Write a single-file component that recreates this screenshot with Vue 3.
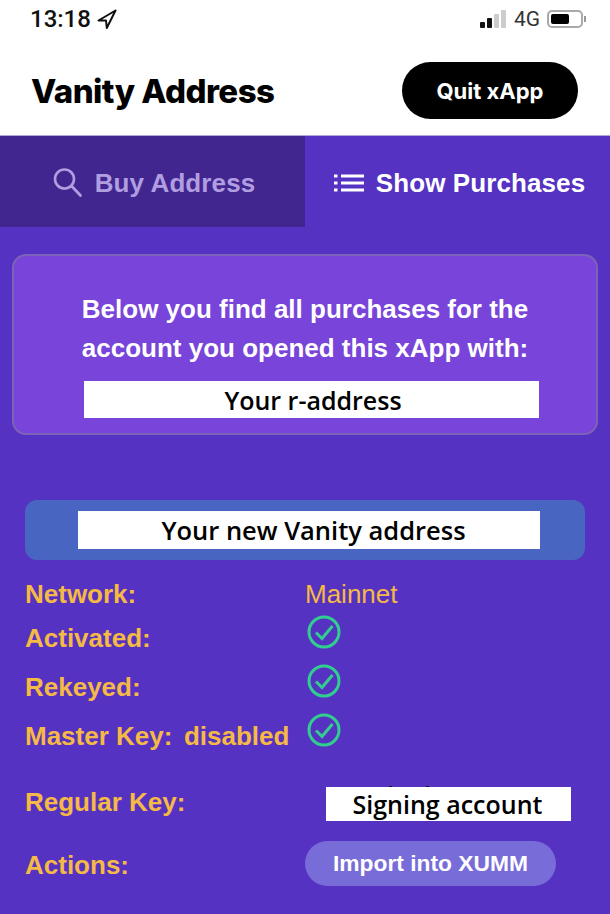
<template>
  <div class="page">
    <div class="status">
      <div class="status-left">
        <span class="time">13:18</span>
        <svg class="nav-arrow" viewBox="0 0 20 20" width="20" height="20">
          <path d="M18.5 1.5 L1.5 11.5 L9 11.5 L9.8 19 Z" fill="none" stroke="#111" stroke-width="2" stroke-linejoin="round" />
        </svg>
      </div>
      <div class="status-right">
        <div class="signal">
          <span v-for="bar in signalBars" :key="bar.h" class="bar" :class="{ off: bar.off }" :style="{ height: bar.h + 'px' }"></span>
        </div>
        <span class="net">4G</span>
        <div class="battery"><span class="level"></span></div>
        <span class="nub"></span>
      </div>
    </div>

    <header class="header">
      <h1>Vanity Address</h1>
      <button class="quit">Quit xApp</button>
    </header>

    <main class="content">
      <nav class="tabs">
        <div class="tab inactive">
          <svg viewBox="0 0 30 30" width="30" height="30">
            <circle cx="11.5" cy="11" r="9.5" fill="none" stroke="currentColor" stroke-width="2.6" />
            <path d="M18.5 18 L27.5 27.5" stroke="currentColor" stroke-width="2.8" stroke-linecap="round" />
          </svg>
          <span>Buy Address</span>
        </div>
        <div class="tab active">
          <svg viewBox="0 0 30 20" width="30" height="20">
            <path d="M0 3h3.5M0 10h3.5M0 17h3.5M7 3h23M7 10h23M7 17h23" stroke="currentColor" stroke-width="3" fill="none" />
          </svg>
          <span>Show Purchases</span>
        </div>
      </nav>

      <section class="notice">
        <p>Below you find all purchases for the<br />account you opened this xApp with:</p>
        <div class="redact notice-redact">Your r-address</div>
      </section>

      <div class="vanity">
        <div class="redact vanity-redact">Your new Vanity address</div>
      </div>

      <div class="details">
        <div class="row row-network">
          <span class="label">Network:</span>
          <span class="value">Mainnet</span>
        </div>
        <div v-for="item in checks" :key="item" class="row row-check">
          <span class="label">{{ item }}</span>
          <svg class="check" viewBox="0 0 34 34" width="34" height="34">
            <circle cx="17" cy="17" r="15" fill="none" stroke="#30cf90" stroke-width="3" />
            <path d="M9 17.5 L15 23.5 L25.5 11" fill="none" stroke="#30cf90" stroke-width="3" />
          </svg>
        </div>
        <div class="row row-regular">
          <span class="label">Regular Key:</span>
          <div class="redact signing">Signing account</div>
        </div>
        <div class="row row-actions">
          <span class="label actions-label">Actions:</span>
          <button class="import">Import into XUMM</button>
        </div>
      </div>
    </main>
  </div>
</template>

<script setup>
const signalBars = [
  { h: 6, off: false },
  { h: 10, off: false },
  { h: 14, off: true },
  { h: 18, off: true },
];

const checks = ['Activated:', 'Rekeyed:', 'Master Key: \u2006disabled'];
</script>

<style>
html,
body {
  margin: 0;
  background: #5632c2;
}
</style>

<style scoped>
.page {
  width: 610px;
  height: 914px;
  overflow: hidden;
  display: flex;
  flex-direction: column;
  font-family: "Liberation Sans", Arial, sans-serif;
}

.status {
  height: 40px;
  flex: none;
  box-sizing: border-box;
  padding: 0 24px 2px 30px;
  display: flex;
  justify-content: space-between;
  align-items: center;
  background: #fff;
}

.status-left {
  display: flex;
  align-items: center;
  gap: 6px;
}

.time {
  font-family: Roboto, sans-serif;
  font-size: 24px;
  font-weight: 500;
  color: #111;
}

.status-right {
  display: flex;
  align-items: center;
}

.signal {
  display: flex;
  align-items: flex-end;
  gap: 2px;
  margin-right: 8px;
}

.bar {
  width: 5px;
  border-radius: 1px;
  background: #111;
}

.bar.off {
  background: #ccc;
}

.net {
  font-family: Roboto, sans-serif;
  font-size: 21px;
  color: #333;
  margin-right: 7px;
}

.battery {
  width: 36px;
  height: 18px;
  box-sizing: border-box;
  border: 2px solid #a9a9a9;
  border-radius: 5px;
  padding: 2px;
}

.level {
  display: block;
  width: 18px;
  height: 100%;
  border-radius: 2px;
  background: #000;
}

.nub {
  width: 2px;
  height: 6px;
  margin-left: 1px;
  background: #999;
}

.header {
  height: 95px;
  flex: none;
  box-sizing: border-box;
  padding: 6px 32px 0 31px;
  display: flex;
  align-items: center;
  justify-content: space-between;
  background: #fff;
}

h1 {
  margin: 0;
  font-family: Inter, sans-serif;
  font-size: 33px;
  font-weight: 800;
  letter-spacing: -0.55px;
  color: #000;
}

.quit {
  width: 176px;
  height: 57px;
  border: 0;
  border-radius: 29px;
  background: #000;
  color: #fff;
  font-family: Inter, sans-serif;
  font-size: 22px;
  font-weight: 700;
}

.content {
  flex: 1;
  background: #5632c2;
  border-top: 1px solid #b3a6dc;
}

.tabs {
  display: flex;
  height: 91px;
}

.tab {
  display: flex;
  align-items: center;
  justify-content: center;
  gap: 12px;
  box-sizing: border-box;
  padding-top: 3px;
  font-size: 26px;
  font-weight: 700;
  letter-spacing: 0.1px;
}

.tab.inactive {
  width: 305px;
  padding-left: 3px;
  background: #42268f;
  color: #b09ee0;
}

.tab.active {
  flex: 1;
  padding-left: 4px;
  color: #fff;
}

.notice {
  margin: 27px 12px 0;
  height: 181px;
  box-sizing: border-box;
  padding-top: 34px;
  border: 2px solid #7c62b8;
  border-radius: 14px;
  background: #7944da;
  display: flex;
  flex-direction: column;
  align-items: center;
}

.notice p {
  margin: 0;
  color: #fff;
  font-size: 26px;
  font-weight: 700;
  line-height: 39px;
  text-align: center;
}

.redact {
  display: flex;
  align-items: center;
  justify-content: center;
  background: #fff;
  color: #000;
  font-family: "Open Sans", sans-serif;
  font-weight: 600;
  font-size: 25px;
}

.notice-redact {
  width: 455px;
  height: 37px;
  box-sizing: border-box;
  padding-left: 3px;
  margin: 13px 0 0 13px;
}

.vanity {
  margin: 65px 25px 0;
  height: 60px;
  box-sizing: border-box;
  padding: 11px 45px 0 53px;
  border-radius: 12px;
  background: #4965c2;
}

.vanity-redact {
  height: 38px;
  padding-left: 9px;
  font-size: 25.5px;
}

.details {
  margin: 14px 0 0 25px;
  color: #f5b945;
  font-size: 26px;
  font-weight: 700;
}

.row {
  display: flex;
  align-items: center;
}

.label {
  width: 280px;
  flex: none;
  white-space: pre;
}

.row-network {
  height: 40px;
}

.value {
  font-weight: 400;
}

.row-check {
  height: 49px;
}

.check {
  margin: -14px 0 0 2px;
}

.row-regular {
  height: 54px;
  margin-top: 14px;
}

.signing {
  position: relative;
  width: 245px;
  height: 34px;
  box-sizing: border-box;
  padding-right: 2px;
  margin: 4px 0 0 21px;
}

/* bits of the hidden text that stick out above the white box */
.signing::before {
  content: "";
  position: absolute;
  left: 63px;
  top: -1px;
  width: 3px;
  height: 1px;
  background: #111;
  box-shadow: 37px 0 #111;
}

.row-actions {
  height: 45px;
  margin-top: 12px;
}

.actions-label {
  padding-top: 4px;
}

.import {
  width: 251px;
  height: 45px;
  border: 0;
  border-radius: 23px;
  background: #786cd9;
  color: #fff;
  font-family: "Liberation Sans", Arial, sans-serif;
  font-size: 22.8px;
  font-weight: 700;
}
</style>
